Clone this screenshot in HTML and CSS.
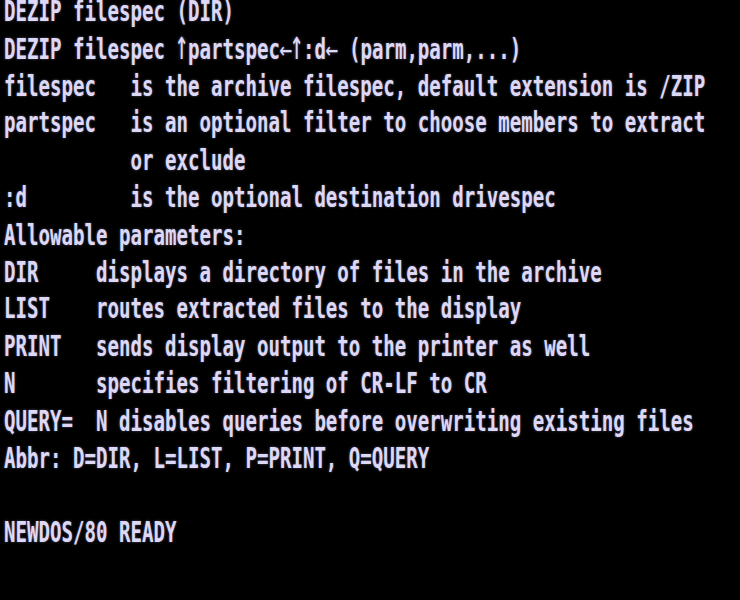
FILE: index.html
```html
<!DOCTYPE html>
<html>
<head>
<meta charset="utf-8">
<link rel="stylesheet" href="styles.css">
</head>
<body>
<pre class="screen">DEZIP filespec (DIR)
DEZIP filespec <span class="up">↑</span>partspec<span class="left">←</span><span class="up">↑</span>:d<span class="left">←</span> (parm,parm,...)
filespec   is the archive filespec, default extension is /ZIP
partspec   is an optional filter to choose members to extract
           or exclude
:d         is the optional destination drivespec
Allowable parameters:
DIR     displays a directory of files in the archive
LIST    routes extracted files to the display
PRINT   sends display output to the printer as well
N       specifies filtering of CR-LF to CR
QUERY=  N disables queries before overwriting existing files
Abbr: D=DIR, L=LIST, P=PRINT, Q=QUERY

NEWDOS/80 READY</pre>
</body>
</html>
```
FILE: styles.css
```css
html, body {
  margin: 0;
  padding: 0;
  background: #000;
  width: 740px;
  height: 600px;
  overflow: hidden;
}
.screen {
  margin: -6px 0 0 0;
  padding: 0 0 0 4px;
  font-family: "DejaVu Sans Mono", monospace;
  font-size: 19.1px;
  font-weight: bold;
  line-height: 24.8px;
  color: #dcd8f6;
  white-space: pre;
  transform: scaleY(1.5);
  transform-origin: 0 0;
  text-shadow: 0 0 2px rgba(200, 190, 255, 0.45);
}
.up {
  display: inline-block;
  width: 11.5px;
  text-align: center;
  font-weight: normal;
  transform: scale(1.2, 1.45);
  transform-origin: 50% 70%;
}
.left {
  display: inline-block;
  width: 11.5px;
  text-align: center;
  font-weight: normal;
  transform: scale(1.1, 1);
}
```
